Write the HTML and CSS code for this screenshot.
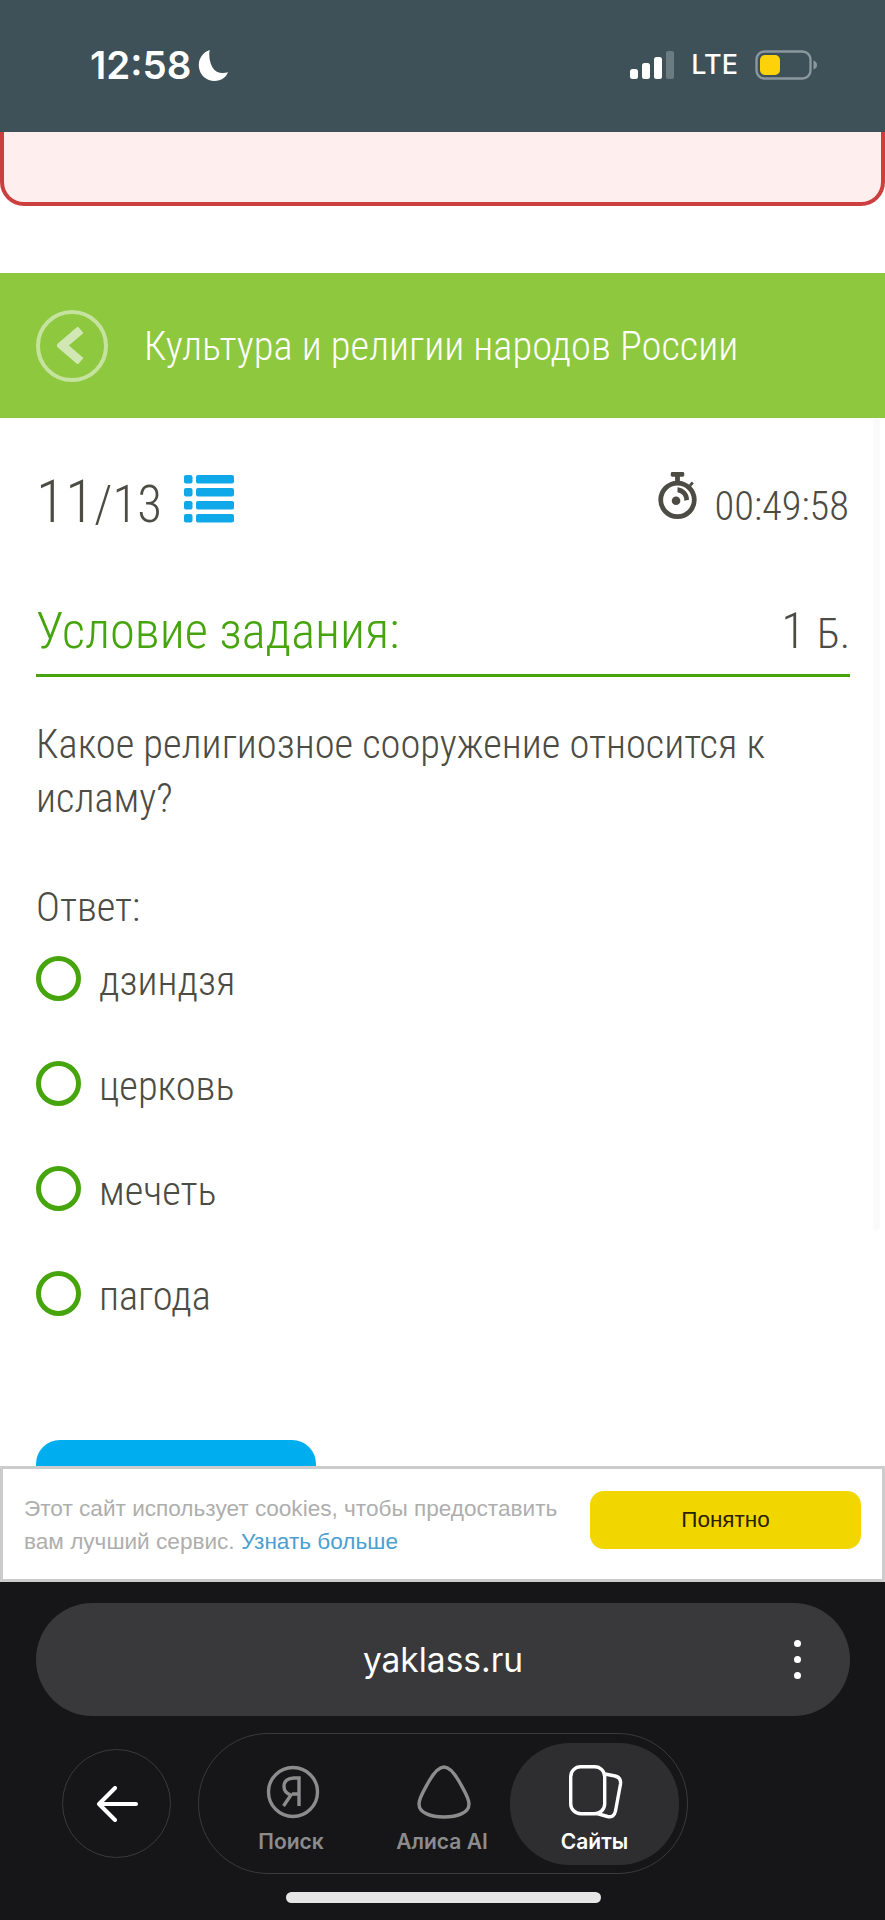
FILE: index.html
```html
<!DOCTYPE html>
<html lang="ru">
<head>
<meta charset="utf-8">
<title>Культура и религии народов России</title>
<link rel="stylesheet" href="styles.css">
</head>
<body>
<div class="screen">
  <header class="status">
    <div class="status-left">
      <span class="clock">12:58</span>
      <svg class="moon" viewBox="0 0 32 34"><path d="M12 1C4 4 0 11 1 19c1 8 8 14 16 14 7 0 12-4 14-9-7 2-13 0-16-5C12 14 11 7 12 1z" fill="#fff"/></svg>
    </div>
    <div class="status-right">
      <svg class="signal" viewBox="0 0 44 28"><rect x="0" y="18" width="8" height="10" rx="2.5" fill="#fff"/><rect x="12" y="12" width="8" height="16" rx="2.5" fill="#fff"/><rect x="24" y="6" width="8" height="22" rx="2.5" fill="#fff"/><rect x="36" y="0" width="8" height="28" rx="2" fill="#6b7b82"/></svg>
      <span class="lte">LTE</span>
      <svg class="battery" viewBox="0 0 62 30"><rect x="1.5" y="1.5" width="54" height="27" rx="8" fill="none" stroke="#8a989e" stroke-width="2.4"/><rect x="5" y="5" width="20" height="20" rx="5" fill="#fdd20a"/><path d="M58.500 10.500c2.500 1 3.500 2.500 3.500 4.500s-1 3.500-3.500 4.500z" fill="#8a989e"/></svg>
    </div>
  </header>

  <main class="page">
    <div class="alert"></div>
    <section class="band">
      <span class="back-round">
        <svg class="back-chevron" viewBox="0 0 32 42"><path d="M27 3 6 21l21 18" fill="none" stroke="#d2e8b4" stroke-width="10"/></svg>
      </span>
      <h1 class="band-title">Культура и религии народов России</h1>
    </section>

    <section class="content">
      <div class="meta">
        <div class="progress">
          <span class="progress-now">11</span><span class="progress-total">/13</span>
          <svg class="list-icon" viewBox="0 0 50 47.500"><g fill="#0fa8e8"><rect x="0" y="0" width="8.500" height="8.500" rx="2"/><rect x="12" y="0" width="38" height="8.500" rx="2"/><rect x="0" y="13" width="8.500" height="8.500" rx="2"/><rect x="12" y="13" width="38" height="8.500" rx="2"/><rect x="0" y="26" width="8.500" height="8.500" rx="2"/><rect x="12" y="26" width="38" height="8.500" rx="2"/><rect x="0" y="39" width="8.500" height="8.500" rx="2"/><rect x="12" y="39" width="38" height="8.500" rx="2"/></g></svg>
        </div>
        <div class="timer">
          <svg class="stopwatch" viewBox="0 0 42 50">
            <rect x="14" y="0" width="14" height="5" rx="1.500" fill="#4c4c44"/>
            <rect x="18.500" y="4" width="5" height="6" fill="#4c4c44"/>
            <path d="M33 13l3-3 2 2-3 3z" fill="#4c4c44"/>
            <circle cx="21" cy="29" r="17.500" fill="none" stroke="#4c4c44" stroke-width="5"/>
            <circle cx="19.500" cy="30" r="4.500" fill="#4c4c44"/>
            <path d="M21 16a13 13 0 0 1 12 13l-5 1a8 8 0 0 0-7-9z" fill="#4c4c44"/>
          </svg>
          <span class="timer-value">00:49:58</span>
        </div>
      </div>

      <div class="task-head">
        <h2 class="task-title">Условие задания:</h2>
        <div class="score"><span class="score-num">1</span> <span class="score-unit">Б.</span></div>
      </div>

      <p class="question">Какое религиозное сооружение относится к исламу?</p>
      <p class="answer-label">Ответ:</p>

      <ul class="options">
        <li class="option"><span class="radio"></span><span class="option-text">дзиндзя</span></li>
        <li class="option"><span class="radio"></span><span class="option-text">церковь</span></li>
        <li class="option"><span class="radio"></span><span class="option-text">мечеть</span></li>
        <li class="option"><span class="radio"></span><span class="option-text">пагода</span></li>
      </ul>
      <div class="submit"></div>
    </section>
    <div class="scroll-edge"></div>
  </main>

  <aside class="cookie">
    <p class="cookie-text">Этот сайт использует cookies, чтобы предоставить вам лучший сервис. <a class="cookie-link">Узнать больше</a></p>
    <button class="cookie-btn">Понятно</button>
  </aside>

  <footer class="browser">
    <div class="url">
      <span class="url-text">yaklass.ru</span>
      <span class="url-menu"><i></i><i></i><i></i></span>
    </div>
    <nav class="tabs">
      <span class="nav-back">
        <svg class="nav-back-icon" viewBox="0 0 42 36"><path d="M40 18H3M19 2 3 18l16 16" fill="none" stroke="#fff" stroke-width="4" stroke-linecap="round" stroke-linejoin="round"/></svg>
      </span>
      <div class="tab-group">
        <div class="tab">
          <svg class="tab-icon" viewBox="0 0 54 54"><circle cx="27" cy="27" r="24.500" fill="none" stroke="#8c8c8c" stroke-width="3.400"/><path d="M33 41V13h-5c-6 0-10 3-10 8.500 0 4.500 2.500 7 7 8.500l-7.500 11M33 29h-7" fill="none" stroke="#8c8c8c" stroke-width="3.400"/></svg>
          <span class="tab-label">Поиск</span>
        </div>
        <div class="tab">
          <svg class="tab-icon" viewBox="0 0 54 54"><path d="M27 2C33 2 38 9 43 18 48 27 52 33 52 39 52 48 40 52 27 52 14 52 2 48 2 39 2 33 6 27 11 18 16 9 21 2 27 2z" fill="none" stroke="#8c8c8c" stroke-width="3.400"/></svg>
          <span class="tab-label">Алиса AI</span>
        </div>
        <div class="tab tab-active">
          <svg class="tab-icon" viewBox="0 0 54 54"><path d="M36 9l10 2c4 1 6 4 5.500 8l-5 27c-1 5-4 6.500-8 5.500l-14-4" fill="none" stroke="#fff" stroke-width="3.400"/><rect x="1.700" y="1.700" width="34" height="47" rx="10" fill="#2e2e30" stroke="#fff" stroke-width="3.400"/></svg>
          <span class="tab-label">Сайты</span>
        </div>
      </div>
    </nav>
    <div class="home-bar"></div>
  </footer>
</div>
</body>
</html>
```

FILE: styles.css
```css
* { box-sizing: border-box; }
html, body { margin: 0; padding: 0; background: #fff; }
body { font-family: "Roboto", "Liberation Sans", sans-serif; }
p, h1, h2, ul { margin: 0; padding: 0; font-weight: inherit; font-size: inherit; }

.screen { width: 885px; height: 1920px; display: flex; flex-direction: column; overflow: hidden; }

.status { height: 132px; flex: none; background: #3e5058; display: flex; justify-content: space-between; align-items: flex-start; padding: 46px 68px 0 90px; color: #fff; }
.status-left { display: flex; align-items: center; gap: 7px; }
.clock { font-family: "Inter", sans-serif; font-size: 38.5px; font-weight: 600; line-height: 38px; }
.moon { width: 31px; height: 33px; display: block; }
.status-right { display: flex; align-items: center; gap: 17px; padding-top: 4px; }
.signal { width: 44px; height: 28px; display: block; }
.lte { font-family: "Inter", sans-serif; font-size: 27px; font-weight: 500; line-height: 30px; }
.battery { width: 62px; height: 30px; display: block; }

.page { flex: 1; min-height: 0; position: relative; overflow: hidden; }
.alert { height: 74px; background: #ffeeee; border: 4px solid #cc3f3f; border-top: 0; border-radius: 0 0 24px 24px; }

.band { margin-top: 67px; height: 145px; background: #8dc83f; display: flex; align-items: center; padding-left: 36px; gap: 36px; }
.back-round { width: 72px; height: 72px; border: 4px solid #c6e29f; border-radius: 50%; display: flex; align-items: center; justify-content: center; flex: none; }
.back-chevron { width: 28px; height: 37px; display: block; margin-right: 2px; }
.band-title { color: #fff; font-size: 40.5px; font-weight: 300; line-height: 50px; white-space: nowrap; font-stretch: 75%; }

.content { padding: 0 35px 0 36px; color: #4c4c44; font-weight: 300; font-stretch: 75%; }
.meta { display: flex; justify-content: space-between; align-items: flex-start; padding-top: 48px; height: 173px; }
.progress { display: flex; align-items: baseline; height: 72px; }
.progress-now { font-size: 60px; line-height: 72px; }
.progress-total { font-size: 51px; line-height: 72px; }
.list-icon { width: 50px; height: 47.5px; display: block; align-self: flex-start; margin: 9px 0 0 22px; }
.timer { display: flex; align-items: flex-start; gap: 16px; }
.stopwatch { width: 41px; height: 48px; display: block; margin-top: 6px; }
.timer-value { font-size: 40.5px; line-height: 50px; margin-top: 15px; margin-right: 1px; }

.task-head { display: flex; justify-content: space-between; align-items: baseline; height: 86px; border-bottom: 3px solid #46a40c; }
.task-title { color: #46a40c; font-size: 50.6px; line-height: 80px; white-space: nowrap; }
.score { font-size: 50px; line-height: 80px; }
.score-unit { font-size: 42px; }

.question { font-size: 40.5px; line-height: 54px; padding-top: 40px; }
.answer-label { font-size: 40.5px; line-height: 54px; padding-top: 55px; }

.options { list-style: none; }
.option { display: flex; align-items: flex-start; gap: 18px; height: 105px; padding-top: 22px; }
.radio { width: 45px; height: 45px; border: 5px solid #46a40c; border-radius: 50%; flex: none; }
.option-text { font-size: 40.5px; line-height: 50px; }

.submit { width: 280px; height: 80px; margin-top: 86px; background: #00aeef; border-radius: 24px; }
.scroll-edge { position: absolute; right: 5px; top: 286px; height: 812px; width: 7px; border-radius: 4px; background: #fafafa; }

.cookie { height: 116px; flex: none; background: #fff; border: 3px solid #cccccc; display: flex; align-items: center; justify-content: space-between; padding: 0 21px; }
.cookie-text { width: 545px; font-family: "Liberation Sans", sans-serif; font-size: 22.6px; line-height: 33px; color: #aeaeae; padding-top: 2px; }
.cookie-link { color: #4b9fd2; }
.cookie-btn { width: 271px; height: 58px; margin-bottom: 9px; border: 0; border-radius: 14px; background: #f2d600; color: #2b2000; font-family: "Liberation Sans", sans-serif; font-size: 22.5px; }

.browser { height: 338px; flex: none; background: #161618; padding: 21px 35px 0 36px; position: relative; }
.url { height: 113px; border-radius: 57px; background: #39393b; display: flex; align-items: center; justify-content: center; position: relative; }
.url-text { color: #fff; font-family: "Inter", sans-serif; font-size: 33.5px; font-weight: 400; }
.url-menu { position: absolute; right: 49px; top: 37px; display: flex; flex-direction: column; gap: 9px; }
.url-menu i { width: 7px; height: 7px; border-radius: 50%; background: #fff; display: block; }

.tabs { display: flex; align-items: center; gap: 27px; margin: 17px 0 0 26px; }
.nav-back { width: 109px; height: 109px; border: 1px solid #3a3a3c; border-radius: 50%; display: flex; align-items: center; justify-content: center; flex: none; }
.nav-back-icon { width: 42px; height: 36px; display: block; }
.tab-group { width: 490px; height: 141px; border: 1px solid #3a3a3c; border-radius: 70px; display: flex; align-items: center; padding: 0 8px 0 27px; }
.tab { width: 130px; height: 122px; display: flex; flex-direction: column; align-items: center; padding-top: 22px; flex: none; }
.tab + .tab { margin-left: 21px; }
.tab-group .tab-active { width: 169px; margin-left: auto; background: #2e2e30; border-radius: 60px; }
.tab-icon { width: 54px; height: 54px; display: block; margin-left: 3px; }
.tab-label { color: #8c8c8c; font-family: "Inter", sans-serif; font-size: 21px; font-weight: 600; line-height: 26px; margin-top: 10px; white-space: nowrap; }
.tab-active .tab-label { color: #fff; }

.home-bar { position: absolute; left: 286px; top: 310px; width: 315px; height: 11px; border-radius: 6px; background: #e6e6e6; }
```
